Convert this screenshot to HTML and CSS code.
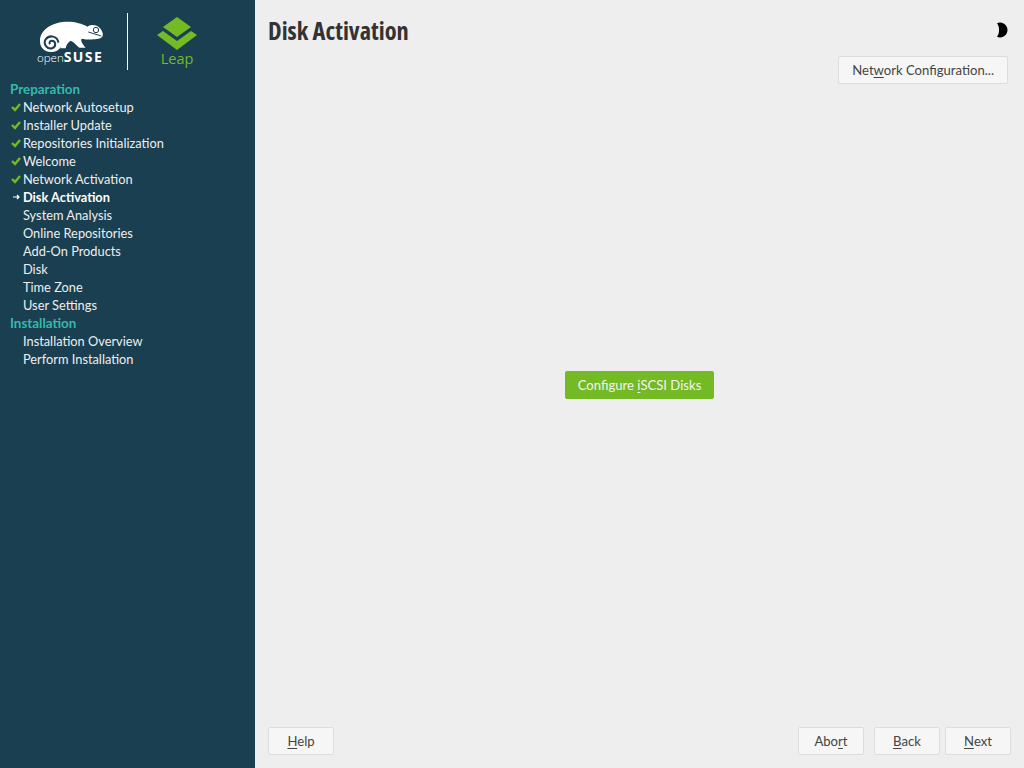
FILE: index.html
```html
<!DOCTYPE html>
<html lang="en">
<head>
  <meta charset="UTF-8">
  <title>Disk Activation</title>
  <link rel="stylesheet" href="styles.css">
</head>
<body>
  <aside class="sidebar">
    <div class="brand">
      <div class="suse">
        <svg class="suse-mark" viewBox="117 60 195 96" width="65" height="32">
          <path fill="#fff" d="M120 125C118 100 140 78 170 70C205 60 240 68 262 80C270 74 290 72 300 85C306 92 310 100 308 108C306 114 295 118 280 118C268 120 255 118 245 116C240 122 250 135 257 143L238 143C228 135 222 125 212 122C205 126 198 135 197 145L182 145L187 128C186 145 170 156 152 156C134 156 120 142 120 125Z"/>
          <path fill="none" stroke="#1a3f51" stroke-width="6" d="M175 128C173 108 148 103 137 118C128 133 143 150 158 144C170 138 167 122 155 122C149 122 147 128 150 133"/>
          <path fill="none" stroke="#1a3f51" stroke-width="3" d="M265 96L304 108"/>
          <circle cx="288" cy="90" r="8" fill="none" stroke="#1a3f51" stroke-width="3"/>
        </svg>
        <div class="suse-name"><span class="suse-open">open</span><span class="suse-bold">SUSE</span></div>
      </div>
      <div class="divider"></div>
      <div class="leap">
        <svg viewBox="0 0 40 33" width="40" height="33">
          <path fill="#73ba25" d="M20 0L34 10L20 20L6 10Z"/>
          <path fill="#73ba25" d="M0 18L6 14L20 24L34 14L40 18L20 33Z"/>
        </svg>
        <div class="leap-name">Leap</div>
      </div>
    </div>

    <ul class="steps">
      <li class="heading">Preparation</li>
      <li class="step"><svg class="mark" viewBox="0 0 10 10"><path d="M1 5L4 8L9 2"/></svg>Network Autosetup</li>
      <li class="step"><svg class="mark" viewBox="0 0 10 10"><path d="M1 5L4 8L9 2"/></svg>Installer Update</li>
      <li class="step"><svg class="mark" viewBox="0 0 10 10"><path d="M1 5L4 8L9 2"/></svg>Repositories Initialization</li>
      <li class="step"><svg class="mark" viewBox="0 0 10 10"><path d="M1 5L4 8L9 2"/></svg>Welcome</li>
      <li class="step"><svg class="mark" viewBox="0 0 10 10"><path d="M1 5L4 8L9 2"/></svg>Network Activation</li>
      <li class="step current"><svg class="arrow" viewBox="0 0 10 10"><path d="M2 5H8M6 3L8 5L6 7"/></svg>Disk Activation</li>
      <li class="step todo">System Analysis</li>
      <li class="step todo">Online Repositories</li>
      <li class="step todo">Add-On Products</li>
      <li class="step todo">Disk</li>
      <li class="step todo">Time Zone</li>
      <li class="step todo">User Settings</li>
      <li class="heading">Installation</li>
      <li class="step todo">Installation Overview</li>
      <li class="step todo">Perform Installation</li>
    </ul>
  </aside>

  <main class="main">
    <div class="header">
      <h1>Disk Activation</h1>
      <svg class="moon" viewBox="0 0 16 16" width="16" height="16">
        <circle cx="8" cy="8" r="7.5" fill="#f0f0f0"/>
        <path fill="#000" d="M5 1.13A7.5 7.5 0 1 1 5 14.87C7 12 7 10 7 8C7 6 7 4 5 1.13Z"/>
      </svg>
    </div>
    <div class="toolbar">
      <button>Net<u>w</u>ork Configuration...</button>
    </div>
    <div class="content">
      <button class="primary">Configure <u>i</u>SCSI Disks</button>
    </div>
    <div class="footer">
      <button class="wide"><u>H</u>elp</button>
      <div class="nav">
        <button class="wide abort">Abo<u>r</u>t</button>
        <button class="wide"><u>B</u>ack</button>
        <button class="wide"><u>N</u>ext</button>
      </div>
    </div>
  </main>
</body>
</html>
```

FILE: styles.css
```css
body {
  margin: 0;
  height: 768px;
  display: flex;
  overflow: hidden;
  background-color: #eeeeee;
  font-family: Lato, sans-serif;
  font-size: 12.8px;
}

.sidebar {
  width: 255px;
  flex-shrink: 0;
  background-color: #1a3f51;
  color: #eeeeee;
}

.brand {
  height: 57px;
  padding: 13px 0 10px 37px;
  display: flex;
}

.suse {
  width: 68px;
  padding-top: 7px;
}

.suse-mark {
  display: block;
  margin-left: 2px;
}

.suse-name {
  margin-top: -3px;
  line-height: 15px;
  color: #fff;
  white-space: nowrap;
}

.suse-open {
  font-size: 11.5px;
  font-family: "Open Sans", sans-serif;
  font-weight: 300;
}

.suse-bold {
  font-size: 14px;
  font-weight: 700;
  letter-spacing: 1.4px;
  font-family: "Open Sans", sans-serif;
}

.divider {
  width: 1px;
  margin-left: 22px;
  background-color: #fff;
}

.leap {
  margin-left: 29px;
  padding-top: 4px;
  text-align: center;
}

.leap svg {
  display: block;
}

.leap-name {
  color: #73ba25;
  font-size: 14.5px;
  line-height: 18px;
  font-family: "Open Sans", sans-serif;
}

.steps {
  list-style: none;
  margin: 0;
  padding: 0;
}

.steps li {
  height: 18px;
  line-height: 18px;
  white-space: nowrap;
}

.heading {
  padding-left: 10px;
  color: #35b9ab;
  font-size: 13.4px;
  font-weight: bold;
}

.step {
  display: flex;
  align-items: center;
  padding-left: 11px;
}

.step.todo {
  padding-left: 23px;
}

.step.current {
  color: #fff;
  font-weight: bold;
}

.mark {
  width: 10px;
  height: 10px;
  margin-right: 2px;
  fill: none;
  stroke: #73ba25;
  stroke-width: 2.4;
}

.arrow {
  width: 10px;
  height: 10px;
  margin-right: 2px;
  fill: none;
  stroke: #fff;
  stroke-width: 1.2;
}

.main {
  flex: 1;
  display: flex;
  flex-direction: column;
  padding: 0 13px;
}

.header {
  height: 52px;
  padding: 4px 3px 0 0;
  display: flex;
  justify-content: space-between;
  align-items: center;
}

.header h1 {
  margin: 0;
  font-family: "Open Sans", sans-serif;
  font-stretch: condensed;
  font-size: 24.4px;
  font-weight: bold;
  color: #333333;
}

.toolbar {
  padding-right: 3px;
  display: flex;
  justify-content: flex-end;
}

.content {
  flex: 1;
  padding-bottom: 41px;
  display: flex;
  justify-content: center;
  align-items: center;
}

.footer {
  height: 41px;
  display: flex;
  justify-content: space-between;
}

.nav {
  display: flex;
  gap: 5px;
}

button {
  height: 28px;
  padding: 0 13px;
  border: 1px solid #dddddd;
  border-radius: 2px;
  background-color: #f6f6f6;
  color: #444444;
  font-family: inherit;
  font-size: 13.1px;
}

button u {
  text-underline-offset: 2px;
}

.primary {
  padding: 0 12px;
  border-color: #73ba25;
  background-color: #73ba25;
  color: #f4f4f4;
}

.wide {
  width: 66px;
  padding: 0;
}

.abort {
  margin-right: 5px;
}
```
